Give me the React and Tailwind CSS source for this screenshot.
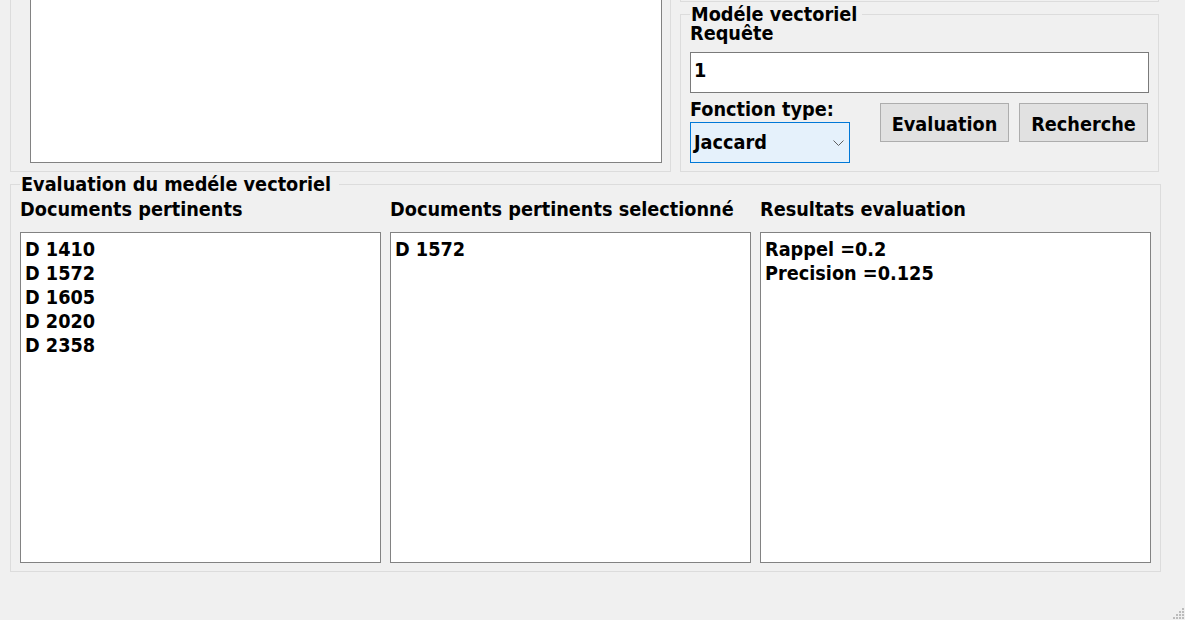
export default function App() {
  const docs = ["D 1410", "D 1572", "D 1605", "D 2020", "D 2358"];
  return (
    <div className="relative w-[1185px] h-[620px] overflow-hidden bg-[#f0f0f0] text-black font-bold font-stretch-condensed font-['DejaVu_Sans_Condensed','DejaVu_Sans',sans-serif] text-[19.7px]">
      {/* top row */}
      <div className="flex pl-[10px] h-[172px]">
        <div className="w-[661px] h-[172px] border-l border-r border-b border-[#dcdcdc] pl-[19px]">
          <div className="w-[632px] h-[163px] bg-white border-l border-r border-b border-[#828282]" />
        </div>
        <div className="ml-[9px] w-[479px] flex flex-col">
          <div className="h-[2px] border-l border-r border-b border-[#dcdcdc]" />
          <fieldset className="mt-[2px] h-[168px] border border-[#dcdcdc] px-[9px]">
            <legend className="leading-[21px] pl-[1px] pr-[5px] whitespace-nowrap">Modéle vectoriel</legend>
            <div className="leading-[17px]">Requête</div>
            <div className="mt-[10px] h-[41px] w-[459px] border border-[#7a7a7a] bg-white flex items-center pl-[3px] pb-[3px] leading-[24px]">
              1
            </div>
            <div className="flex items-start">
              <div className="flex flex-col w-[160px]">
                <div className="mt-[6px] leading-[21px] whitespace-nowrap">Fonction type:</div>
                <div className="mt-[2px] h-[41px] border border-[#0078d7] bg-[#e5f1fb] flex items-center pl-[3px] pr-[5px] pt-[1px] leading-[24px]">
                  <span>Jaccard</span>
                  <svg className="ml-auto" width="11" height="6" viewBox="0 0 11 6">
                    <path d="M0.5 0.5 L5.5 5.5 L10.5 0.5" fill="none" stroke="#5f5f5f" strokeWidth="1" />
                  </svg>
                </div>
              </div>
              <div className="ml-[30px] mt-[10px] w-[129px] h-[39px] border border-[#adadad] bg-[#e1e1e1] flex items-center justify-center pt-[4px] leading-[24px]">
                Evaluation
              </div>
              <div className="ml-[10px] mt-[10px] w-[129px] h-[39px] border border-[#adadad] bg-[#e1e1e1] flex items-center justify-center pt-[4px] leading-[24px]">
                Recherche
              </div>
            </div>
          </fieldset>
        </div>
      </div>

      {/* bottom group */}
      <fieldset className="mt-[2px] ml-[10px] w-[1151px] h-[398px] border border-[#dcdcdc] px-[9px]">
        <legend className="leading-[21px] pl-[1px] pr-[8px] whitespace-nowrap">Evaluation du medéle vectoriel</legend>
        <div className="flex">
          <div className="w-[361px] flex flex-col">
            <div className="mt-[3px] leading-[24px] whitespace-nowrap">Documents pertinents</div>
            <div className="mt-[10px] h-[331px] border border-[#828282] bg-white pl-[4px] pt-[5px] leading-[24px]">
              {docs.map((d) => (
                <div key={d}>{d}</div>
              ))}
            </div>
          </div>
          <div className="ml-[9px] w-[361px] flex flex-col">
            <div className="mt-[3px] leading-[24px] whitespace-nowrap">Documents pertinents selectionné</div>
            <div className="mt-[10px] h-[331px] border border-[#828282] bg-white pl-[4px] pt-[5px] leading-[24px]">
              <div>D 1572</div>
            </div>
          </div>
          <div className="ml-[9px] w-[391px] flex flex-col">
            <div className="mt-[3px] leading-[24px] whitespace-nowrap">Resultats evaluation</div>
            <div className="mt-[10px] h-[331px] border border-[#828282] bg-white pl-[4px] pt-[5px] leading-[24px]">
              <div>Rappel =0.2</div>
              <div>Precision =0.125</div>
            </div>
          </div>
        </div>
      </fieldset>

      {/* size grip */}
      <svg className="absolute right-0 bottom-0" width="12" height="12" viewBox="0 0 12 12">
        <g fill="#bcbcbc">
          <rect x="9" y="0" width="2" height="2" />
          <rect x="6" y="3" width="2" height="2" />
          <rect x="9" y="3" width="2" height="2" />
          <rect x="3" y="6" width="2" height="2" />
          <rect x="6" y="6" width="2" height="2" />
          <rect x="9" y="6" width="2" height="2" />
          <rect x="0" y="9" width="2" height="2" />
          <rect x="3" y="9" width="2" height="2" />
          <rect x="6" y="9" width="2" height="2" />
          <rect x="9" y="9" width="2" height="2" />
        </g>
      </svg>
    </div>
  );
}
